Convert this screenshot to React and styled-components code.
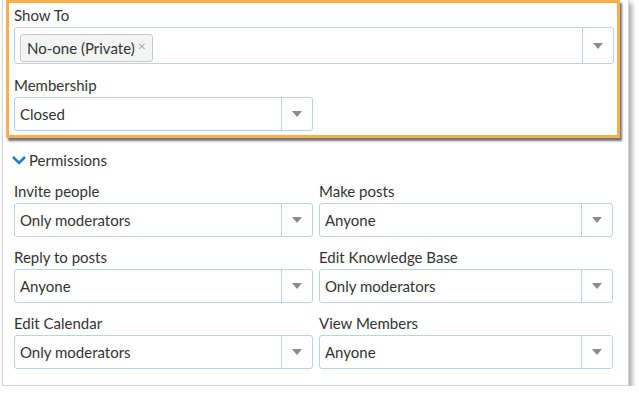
import styled, { createGlobalStyle } from 'styled-components';

const Global = createGlobalStyle`
  body {
    margin: 0;
    background: #fff;
    font-family: Lato, "Open Sans", sans-serif;
    color: #333;
  }
`;

const Card = styled.div`
  box-sizing: border-box;
  width: 627px;
  margin-left: 2px;
  padding: 0 14px 16px 3px;
  background: #fff;
  border: 1px solid #d6d6d6;
  border-top: 0;
  box-shadow: 3px 3px 5px rgba(0, 0, 0, 0.35);
`;

const Highlight = styled.div`
  box-sizing: border-box;
  width: 614px;
  padding: 2px 3px 4px 5px;
  border: 3px solid #f8b04e;
  box-shadow: 2px 3px 2px rgba(0, 0, 0, 0.55);
`;

const Body = styled.div`
  padding-left: 8px;
`;

const Field = styled.div`
  display: flex;
  flex-direction: column;
  gap: 2px;
  margin-bottom: ${(p) => p.$mb ?? 10}px;
`;

const Label = styled.div`
  font-size: 15px;
  line-height: 20px;
  color: #333;
`;

const Box = styled.div`
  box-sizing: border-box;
  display: flex;
  width: ${(p) => p.$w || '100%'};
  height: ${(p) => p.$h || 34}px;
  border: 1px solid #b5d3ea;
  border-radius: 3px;
  background: #fff;
`;

const Value = styled.div`
  flex: 1;
  display: flex;
  align-items: center;
  padding-left: 5px;
  font-size: 15px;
  color: #333;
`;

const Tags = styled.div`
  flex: 1;
  display: flex;
  align-items: flex-start;
  padding: 6px 0 0 5px;
`;

const Tag = styled.div`
  box-sizing: border-box;
  display: flex;
  align-items: center;
  height: 28px;
  padding: 0 6px;
  gap: 3px;
  background: #f3f4f4;
  border: 1px solid #c8c8c8;
  border-radius: 3px;
  font-size: 15px;
  color: #333;
`;

const Remove = styled.span`
  color: #aaa;
  font-size: 14px;
  margin-top: -6px;
`;

const Arrow = styled.div`
  width: 30px;
  display: flex;
  align-items: center;
  justify-content: center;
  border-left: 1px solid #b5d3ea;

  &::after {
    content: '';
    border-left: 5px solid transparent;
    border-right: 5px solid transparent;
    border-top: 6px solid #8a8a8a;
  }
`;

const Section = styled.div`
  display: flex;
  align-items: center;
  gap: 2px;
  margin: 12px 0 11px -3px;
  font-size: 15px;
  line-height: 20px;
  color: #333;
`;

const Grid = styled.div`
  display: grid;
  grid-template-columns: 299px 294px;
  column-gap: 6px;
`;

const Select = ({ value, w }) => (
  <Box $w={w}>
    <Value>{value}</Value>
    <Arrow />
  </Box>
);

const perms = [
  ['Invite people', 'Only moderators'],
  ['Make posts', 'Anyone'],
  ['Reply to posts', 'Anyone'],
  ['Edit Knowledge Base', 'Only moderators'],
  ['Edit Calendar', 'Only moderators'],
  ['View Members', 'Anyone'],
];

export default function App() {
  return (
    <>
      <Global />
      <Card>
        <Highlight>
          <Field $mb={11}>
            <Label>Show To</Label>
            <Box $h={37}>
              <Tags>
                <Tag>
                  No-one (Private)
                  <Remove>×</Remove>
                </Tag>
              </Tags>
              <Arrow />
            </Box>
          </Field>
          <Field $mb={0}>
            <Label>Membership</Label>
            <Select value="Closed" w="299px" />
          </Field>
        </Highlight>
        <Body>
          <Section>
            <svg width="16" height="10" viewBox="0 0 16 10">
              <path d="M2 2 L8 8 L14 2" fill="none" stroke="#1f7dc4" strokeWidth="2.6" />
            </svg>
            Permissions
          </Section>
          <Grid>
            {perms.map(([label, value], i) => (
              <Field key={label} $mb={i >= 4 ? 0 : 10}>
                <Label>{label}</Label>
                <Select value={value} />
              </Field>
            ))}
          </Grid>
        </Body>
      </Card>
    </>
  );
}
